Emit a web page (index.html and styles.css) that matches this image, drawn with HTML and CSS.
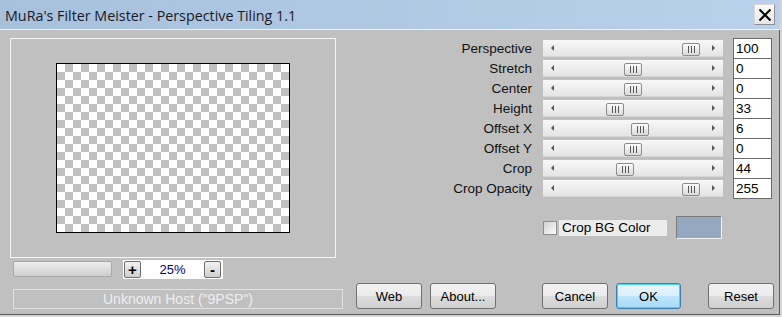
FILE: index.html
```html
<!DOCTYPE html>
<html lang="en">
<head>
  <meta charset="UTF-8">
  <title>Perspective Tiling</title>
  <link rel="stylesheet" href="styles.css">
</head>
<body>
<div class="window">
  <div class="titlebar">
    <span class="title">MuRa's Filter Meister - Perspective Tiling 1.1</span>
    <button class="close" title="Close">
      <svg width="14" height="14" viewBox="0 0 14 14"><path d="M1.5 1.5 L12.5 12.5 M12.5 1.5 L1.5 12.5" stroke="#000" stroke-width="2" fill="none"/></svg>
    </button>
  </div>

  <div class="client">
    <div class="top">
      <div class="left">
        <div class="preview"><div class="checker"></div></div>
        <div class="zoom-row">
          <div class="zoom-bar"></div>
          <div class="zoom-ctl">
            <button class="mini">+</button>
            <span class="pct">25%</span>
            <button class="mini">-</button>
          </div>
        </div>
      </div>

      <div class="right">
        <div class="row"><label>Perspective</label><div class="track"><span class="thumb" style="left: 139px"></span></div><input class="val" value="100"></div>
        <div class="row"><label>Stretch</label><div class="track"><span class="thumb" style="left: 81px"></span></div><input class="val" value="0"></div>
        <div class="row"><label>Center</label><div class="track"><span class="thumb" style="left: 81px"></span></div><input class="val" value="0"></div>
        <div class="row"><label>Height</label><div class="track"><span class="thumb" style="left: 63px"></span></div><input class="val" value="33"></div>
        <div class="row"><label>Offset X</label><div class="track"><span class="thumb" style="left: 88px"></span></div><input class="val" value="6"></div>
        <div class="row"><label>Offset Y</label><div class="track"><span class="thumb" style="left: 81px"></span></div><input class="val" value="0"></div>
        <div class="row"><label>Crop</label><div class="track"><span class="thumb" style="left: 73px"></span></div><input class="val" value="44"></div>
        <div class="row"><label>Crop Opacity</label><div class="track"><span class="thumb" style="left: 139px"></span></div><input class="val" value="255"></div>

        <div class="bg-row">
          <span class="check"></span>
          <span class="check-label">Crop BG Color</span>
          <span class="swatch"></span>
        </div>
      </div>
    </div>

    <div class="bottom">
      <div class="status">Unknown Host ("9PSP")</div>
      <button class="btn web">Web</button>
      <button class="btn about">About...</button>
      <button class="btn cancel">Cancel</button>
      <button class="btn ok">OK</button>
      <button class="btn reset">Reset</button>
    </div>
  </div>
</div>
</body>
</html>
```

FILE: styles.css
```css
html { background: #d6d6d6; }
body { margin: 0; font-family: "Liberation Sans", Arial, sans-serif; font-size: 13px; color: #000; }
button { font-family: inherit; font-size: 13px; padding: 0; }

.window { width: 780px; height: 315px; background: #c0c0c0; }

.titlebar { height: 29px; border-bottom: 1px solid #eef2f6; background: linear-gradient(90deg, #a7c0dc, #b9d1ea); display: flex; align-items: center; justify-content: space-between; padding: 0 5px; box-sizing: content-box; }
.title { font-family: "Open Sans", "Noto Sans", sans-serif; font-size: 14.3px; color: #1a1a26; padding-top: 1px; }
.close { width: 21px; height: 21px; margin-right: 0; display: flex; align-items: center; justify-content: center; background: linear-gradient(#fbfbfb, #e6e6e6); border: 1px solid #8d8d8d; border-top-color: #d9d9d9; border-left-color: #d9d9d9; }

.client { height: 284px; border-right: 1px solid #5c5c5c; border-bottom: 1px solid #5c5c5c; }
.top { display: flex; height: 249px; }

.left { width: 336px; padding-left: 10px; }
.preview { margin-top: 8px; width: 326px; height: 220px; box-sizing: border-box; border: 1px solid #f3f7fb; display: flex; align-items: center; justify-content: center; }
.checker { width: 234px; height: 170px; box-sizing: border-box; border: 1px solid #000; background: conic-gradient(#c0c0c0 90deg, #fff 90deg 180deg, #c0c0c0 180deg 270deg, #fff 270deg) 0 0 / 16px 16px; }

.zoom-row { display: flex; align-items: flex-start; margin-top: 2px; }
.zoom-bar { width: 99px; height: 16px; margin: 1px 0 0 3px; box-sizing: border-box; border: 1px solid #a9a9a9; border-radius: 2px; background: linear-gradient(#ececec, #cfcfcf); }
.zoom-ctl { width: 100px; height: 19px; margin-left: 11px; background: #fff; display: flex; align-items: center; justify-content: space-between; padding: 0 2px 0 1px; box-sizing: border-box; }
.mini { width: 17px; height: 17px; border: 1px solid #6f6f6f; border-radius: 2px; background: linear-gradient(#f2f2f2, #cfcfcf); font-weight: bold; font-size: 15px; line-height: 14px; color: #000; }
.pct { color: #000080; font-size: 13px; }

.right { padding-top: 8px; }
.row { display: flex; align-items: center; height: 20px; }
.row label { width: 186px; margin-right: 11px; text-align: right; font-size: 13.5px; color: #111; }
.track { position: relative; width: 180px; height: 17px; margin-right: 10px; box-sizing: border-box; border-bottom: 1px solid #d6d6d6; background: linear-gradient(#f8f8f8, #e4e4e4); }
.track::before, .track::after { content: ""; position: absolute; top: 5px; border-top: 3px solid transparent; border-bottom: 3px solid transparent; }
.track::before { left: 8px; border-right: 3px solid #555; }
.track::after { left: 169px; border-left: 3px solid #555; }
.thumb { position: absolute; top: 3px; width: 18px; height: 13px; box-sizing: border-box; border: 1px solid #8c8c8c; border-radius: 2px; background: linear-gradient(#fdfdfd, #d9d9d9); }
.thumb::before { content: ""; position: absolute; left: 5px; top: 2px; width: 7px; height: 7px; background: repeating-linear-gradient(90deg, #555 0 1px, transparent 1px 3px); }
.val { align-self: flex-start; width: 39px; height: 21px; box-sizing: border-box; border: 1px solid #6b6b6b; padding: 0 0 0 2px; font-family: inherit; font-size: 13.5px; background: #fff; outline: none; }

.bg-row { display: flex; align-items: center; height: 23px; margin: 18px 0 0 197px; }
.check { width: 14px; height: 14px; box-sizing: border-box; border: 1px solid #8e8e8e; background: linear-gradient(135deg, #d2d2d2, #fbfbfb); }
.check-label { width: 108px; height: 16px; margin-left: 2px; padding-left: 3px; box-sizing: border-box; background: #ececec; font-size: 13.5px; line-height: 16px; }
.swatch { width: 46px; height: 23px; margin-left: 9px; box-sizing: border-box; background: #94a8c0; border: 1px solid #f2f2f2; border-top-color: #7c7c7c; border-left-color: #7c7c7c; }

.bottom { display: flex; align-items: flex-end; height: 26px; margin-top: 4px; padding-left: 13px; }
.status { width: 330px; height: 20px; margin-right: 13px; box-sizing: border-box; border: 1px solid #e2e2e2; color: #eeeeee; font-size: 14px; line-height: 18px; text-align: center; }
.btn { width: 66px; height: 26px; border: 1px solid #707070; border-radius: 3px; background: linear-gradient(#f2f2f2 0%, #ebebeb 50%, #dddddd 50%, #cfcfcf 100%); color: #000; }
.about { margin-left: 8px; }
.cancel { margin-left: 46px; }
.ok { margin-left: 8px; width: 65px; border-color: #3c7fb1; box-shadow: inset 0 0 0 1px #48d2ff; background: linear-gradient(#eaf6fd 0%, #d9f0fc 50%, #bee6fd 50%, #a7d9f5 100%); }
.reset { margin-left: 27px; }
```
